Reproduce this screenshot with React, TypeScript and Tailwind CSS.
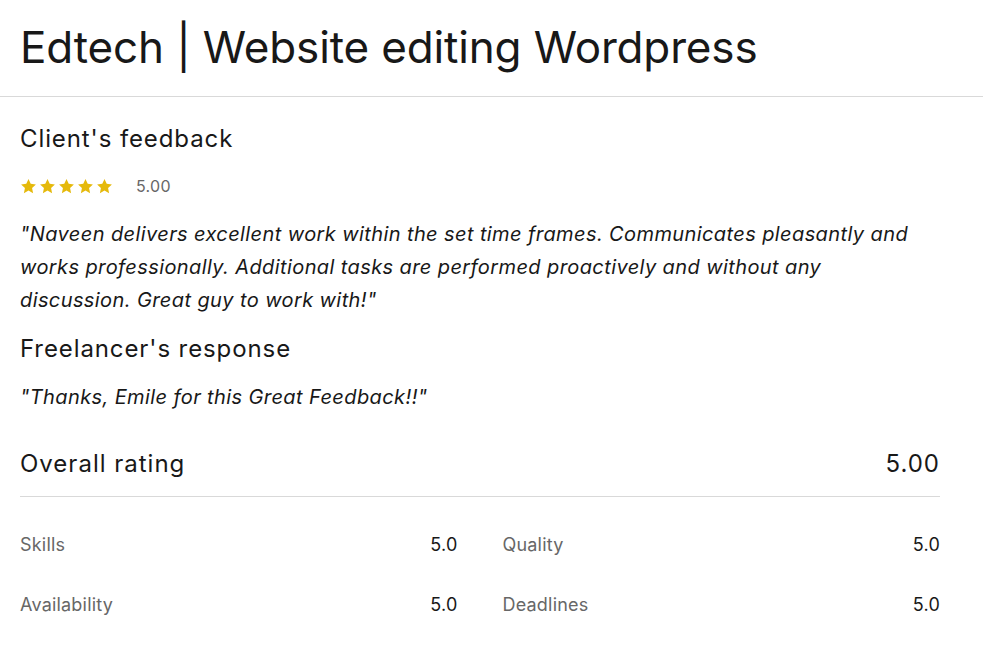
import React from 'react';

const Star: React.FC = () => (
  <svg viewBox="0 0 20 20" className="w-[17px] h-[17px]" fill="#e5b90b">
    <path d="M10 1.2l2.6 5.6 6.1.7-4.5 4.2 1.2 6.1L10 14.8l-5.4 3 1.2-6.1L1.3 7.5l6.1-.7z" />
  </svg>
);

const subRatings = [
  { label: 'Skills', value: '5.0' },
  { label: 'Quality', value: '5.0' },
  { label: 'Availability', value: '5.0' },
  { label: 'Deadlines', value: '5.0' },
];

export default function App() {
  return (
    <div className="min-h-screen bg-white text-[#181818] font-['Inter','Liberation_Sans',Arial,sans-serif]">
      <header className="px-5 pt-[19px] pb-[21px] border-b border-[#d9d9d9]">
        <h1 className="text-[44px] leading-[56px] tracking-[-0.15px]">Edtech | Website editing Wordpress</h1>
      </header>

      <main className="w-[920px] ml-5 pt-[26px]">
        <h2 className="text-[24px] leading-[32px] tracking-[0.9px]">Client's feedback</h2>
        <div className="flex items-center mt-[20px] h-[22px]">
          <div className="flex gap-[2px]">
            <Star />
            <Star />
            <Star />
            <Star />
            <Star />
          </div>
          <span className="ml-[23px] text-[16px] text-[#676767] tracking-[0.3px]">5.00</span>
        </div>

        <p className="mt-[21px] text-[20px] leading-[33px] italic tracking-[0.4px] pr-[10px]">
          "Naveen delivers excellent work within the set time frames. Communicates pleasantly and works professionally. Additional tasks are performed proactively and without any discussion. Great guy to work with!"
        </p>

        <h2 className="mt-[16px] text-[24px] leading-[32px] tracking-[0.9px]">Freelancer's response</h2>
        <p className="mt-[16px] text-[20px] leading-[33px] italic tracking-[0.4px]">"Thanks, Emile for this Great Feedback!!"</p>

        <div className="mt-[34px] flex justify-between items-center pb-[16px] border-b border-[#d9d9d9]">
          <span className="text-[24px] leading-[32px] tracking-[1px]">Overall rating</span>
          <span className="text-[24px] leading-[32px] tracking-[1px]">5.00</span>
        </div>

        <div className="grid grid-cols-2 gap-x-[45px] mt-[35px] gap-y-[36px]">
          {subRatings.map((r) => (
            <div key={r.label} className="flex justify-between items-center h-[24px] text-[18px] tracking-[0.2px]">
              <span className="text-[#676767]">{r.label}</span>
              <span>{r.value}</span>
            </div>
          ))}
        </div>
      </main>
    </div>
  );
}
